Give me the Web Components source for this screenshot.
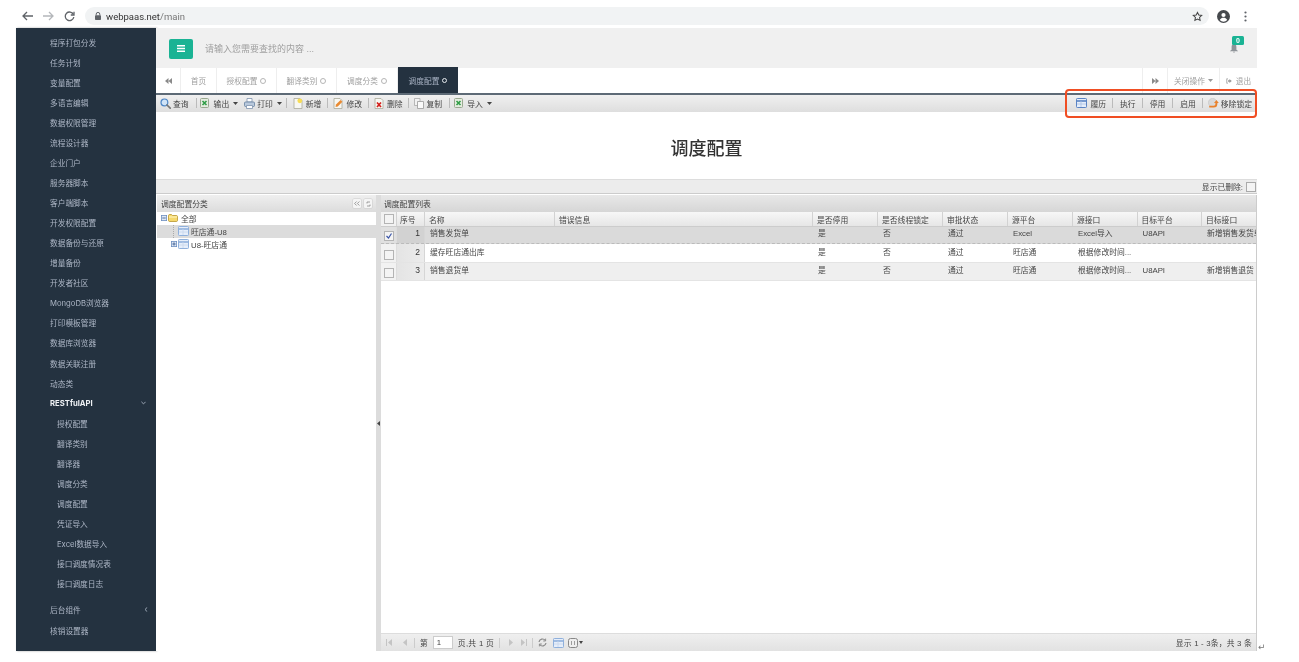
<!DOCTYPE html>
<html lang="zh">
<head>
<meta charset="utf-8">
<title>调度配置</title>
<style>
html, body { margin: 0; height: 662px; overflow: hidden; background: #fff; }
body { font-family: "Liberation Sans", "Noto Sans CJK SC", sans-serif; font-size: 7.8px; color: #444; filter: blur(.35px); }
</style>
</head>
<body>
<app-shell>
  <browser-bar slot="bar"></browser-bar>
  <side-menu slot="side"></side-menu>
  <top-header></top-header>
  <tab-strip></tab-strip>
  <tool-bar></tool-bar>
  <page-title>调度配置</page-title>
  <filter-bar></filter-bar>
  <split-view>
    <tree-panel slot="left"></tree-panel>
    <grid-panel slot="right"></grid-panel>
  </split-view>
</app-shell>

<script>
// shared little pictures for the toolbars and the tree
const doc = (inner) => `<svg width="10" height="11" viewBox="0 0 10 11"><path d="M1 .5h6l2 2v8H1z" fill="#f7f7f2" stroke="#a9a99a" stroke-width=".8"/>${inner}</svg>`;
const grid = (line, soft) => `<svg width="11" height="10" viewBox="0 0 11 10"><rect x=".5" y=".5" width="10" height="9" rx=".8" fill="#e6eefa" stroke="${line}"/><path d="M1 3h9" stroke="${line}" stroke-width="1.6"/><path d="M1 6h9M5 3v6" stroke="${soft}" stroke-width=".8"/></svg>`;
const icons = {
  search: `<svg width="11" height="11" viewBox="0 0 11 11"><circle cx="4.4" cy="4.4" r="3.4" fill="#cfe3f7" stroke="#4d86c6" stroke-width="1.2"/><path d="M7 7l3.2 3.2" stroke="#777" stroke-width="1.7" stroke-linecap="round"/></svg>`,
  excel: `<svg width="9" height="10" viewBox="0 0 9 10"><rect x=".5" y=".5" width="8" height="9" rx="1" fill="#e4ecdf" stroke="#9aa890"/><path d="M2.5 3l4 4M6.5 3l-4 4" stroke="#2f9d46" stroke-width="1.6"/></svg>`,
  print: `<svg width="11" height="11" viewBox="0 0 11 11"><path d="M3 .5h5v3.5H3z" fill="#fff" stroke="#7f93ad" stroke-width=".8"/><rect x=".5" y="4" width="10" height="4.5" rx="1" fill="#b9c9dc" stroke="#64809f" stroke-width=".8"/><path d="M2.5 7.5h6v3h-6z" fill="#fff" stroke="#7f93ad" stroke-width=".8"/></svg>`,
  add: doc(`<circle cx="6.8" cy="2.8" r="2.4" fill="#f7dc55"/>`),
  edit: doc(`<path d="M2.5 9l.5-2.4L7.6 2l1.8 1.8L4.8 8.4z" fill="#e98a32"/>`),
  del: doc(`<path d="M3 4.5l4 4.5M7 4.5l-4 4.5" stroke="#d3201c" stroke-width="1.7"/>`),
  copy: `<svg width="10" height="11" viewBox="0 0 10 11"><path d="M.5.5h5.5v7H.5z" fill="#f2f2f2" stroke="#aaa" stroke-width=".8"/><path d="M3.5 3.5h6v7h-6z" fill="#fafafa" stroke="#999" stroke-width=".8"/></svg>`,
  unlock: `<svg width="11" height="11" viewBox="0 0 11 11"><circle cx="4.6" cy="4.6" r="4.2" fill="#d9d9d9" stroke="#c2c2c2" stroke-width=".6"/><path d="M1.2 8.6h4.6c1.6 0 2.6-1 2.6-2.6V4.4" fill="none" stroke="#e9822c" stroke-width="1.9"/><path d="M6 5l2.4-3L10.8 5z" fill="#e9822c"/></svg>`,
  table: grid("#5b84c4", "#a9c0e4"),
  paleTable: grid("#8fb0dc", "#c6d6ec"),
  box: (sign) => `<svg width="6" height="6" viewBox="0 0 6 6"><rect x=".4" y=".4" width="5.2" height="5.2" fill="#dfe8f5" stroke="#6d8fc0" stroke-width=".8"/><path d="${sign === '+' ? 'M1.3 3h3.4M3 1.3v3.4' : 'M1.3 3h3.4'}" stroke="#34568c" stroke-width=".8"/></svg>`,
  folder: `<svg width="10" height="8" viewBox="0 0 10 8"><path d="M.5 1.5C.5 1 1 .5 1.5.5h2l1 1h4c.5 0 1 .5 1 1v4c0 .5-.5 1-1 1h-7c-.5 0-1-.5-1-1z" fill="#f6d86b" stroke="#b8962e" stroke-width=".8"/><path d="M1 3h8" stroke="#fff6c4"/></svg>`
};

class AppShell extends HTMLElement {
  constructor() {
    super();
    this.attachShadow({ mode: "open" }).innerHTML = `
    <style>
      :host { display: block; width: 1299px; }
      .work { display: flex; height: 623px; margin-left: 16px; }
      main { width: 1101px; display: flex; flex-direction: column; min-width: 0; }
      .mark { align-self: flex-end; margin: 0 0 -1px 1px; font: 9px "DejaVu Sans", sans-serif; color: #777; }
    </style>
    <slot name="bar"></slot>
    <div class="work">
      <slot name="side"></slot>
      <main><slot></slot></main>
      <span class="mark">↵</span>
    </div>`;
  }
}

class BrowserBar extends HTMLElement {
  constructor() {
    super();
    this.attachShadow({ mode: "open" }).innerHTML = `
    <style>
      :host { display: flex; align-items: center; box-sizing: border-box; width: 1257px; height: 28px; padding: 4px 9px 0 22px; background: #fff; }
      svg { display: block; flex: none; }
      .pill { flex: none; width: 1124px; height: 18px; margin-left: 10px; border-radius: 9px; background: #f1f3f4; display: flex; align-items: center; padding: 0 6px 0 10px; box-sizing: border-box; }
      .url { margin-left: 5px; font: 9.5px Roboto, sans-serif; color: #333; }
      .url span { color: #777; }
      .star { margin-left: auto; }
    </style>
    <svg width="11" height="10" viewBox="0 0 11 10" fill="none" stroke="#5f6368" stroke-width="1.3"><path d="M11 5H1.2M5 1L1 5l4 4"/></svg>
    <svg style="margin-left:10px" width="11" height="10" viewBox="0 0 11 10" fill="none" stroke="#b4b7ba" stroke-width="1.3"><path d="M0 5h9.8M6 1l4 4-4 4"/></svg>
    <svg style="margin-left:10px" width="11" height="11" viewBox="0 0 11 11" fill="none" stroke="#5f6368" stroke-width="1.3"><path d="M9.4 3.4A4.3 4.3 0 1 0 9.8 6"/><path d="M10 .8v3.2H6.8" /></svg>
    <div class="pill">
      <svg width="6" height="8" viewBox="0 0 6 8"><path d="M1.2 3.4V2.2a1.8 1.8 0 0 1 3.6 0v1.2" fill="none" stroke="#5f6368"/><rect y="3.2" width="6" height="4.8" rx=".8" fill="#5f6368"/></svg>
      <div class="url">webpaas.net<span>/main</span></div>
      <svg class="star" width="11" height="11" viewBox="0 0 24 24" fill="none" stroke="#444" stroke-width="2.2"><path d="M12 3l2.8 5.9 6.4.8-4.7 4.4 1.2 6.4L12 17.4l-5.7 3.1 1.2-6.4-4.7-4.4 6.4-.8z"/></svg>
    </div>
    <svg style="margin-left:8px" width="13" height="13" viewBox="0 0 13 13"><circle cx="6.5" cy="6.5" r="6.5" fill="#46494d"/><circle cx="6.5" cy="5" r="2.1" fill="#fff"/><path d="M2.8 10c.8-1.6 2.2-2.2 3.7-2.2s2.9.6 3.7 2.2a5 5 0 0 1-7.4 0z" fill="#fff"/></svg>
    <svg style="margin-left:14px" width="3" height="11" viewBox="0 0 3 11" fill="#5f6368"><circle cx="1.5" cy="1.5" r="1.1"/><circle cx="1.5" cy="5.5" r="1.1"/><circle cx="1.5" cy="9.5" r="1.1"/></svg>`;
  }
}

class SideMenu extends HTMLElement {
  constructor() {
    super();
    const top = ["程序打包分发", "任务计划", "变量配置", "多语言编辑", "数据权限管理", "流程设计器", "企业门户", "服务器脚本", "客户端脚本", "开发权限配置", "数据备份与还原", "增量备份", "开发者社区", "MongoDB浏览器", "打印模板管理", "数据库浏览器", "数据关联注册", "动态类"];
    const sub = ["授权配置", "翻译类别", "翻译器", "调度分类", "调度配置", "凭证导入", "Excel数据导入", "接口调度情况表", "接口调度日志"];
    const rows = top.map(t => `<li>${t}</li>`).join("")
      + `<li class="open">RESTfulAPI<svg width="5" height="4" viewBox="0 0 5 4" fill="none" stroke="#9aa5b3"><path d="M.4.8l2.1 2.1L4.6.8"/></svg></li>`
      + sub.map(t => `<li class="sub">${t}</li>`).join("")
      + `<li class="gap">后台组件<svg style="margin-right:-2px" width="4" height="5" viewBox="0 0 4 5" fill="none" stroke="#9aa5b3"><path d="M3.2.4L1 2.5l2.2 2.1"/></svg></li><li>核销设置器</li>`;
    this.attachShadow({ mode: "open" }).innerHTML = `
    <style>
      :host { display: block; flex: none; width: 140px; height: 100%; background: #243240; box-shadow: 1px 0 2px rgba(0,0,0,.35); overflow: hidden; }
      ul { list-style: none; margin: 0; padding: 4px 10px 0 34px; }
      li { height: 20.07px; display: flex; align-items: center; justify-content: space-between; font: 7.7px Inter, "Noto Sans CJK SC", sans-serif; color: #adb6c5; white-space: nowrap; }
      .open { font-weight: 700; color: #eef1f4; }
      .sub { padding-left: 7px; }
      .gap { margin-top: 6.2px; }
    </style>
    <ul>${rows}</ul>`;
  }
}

class TopHeader extends HTMLElement {
  constructor() {
    super();
    this.attachShadow({ mode: "open" }).innerHTML = `
    <style>
      :host { display: flex; align-items: center; flex: none; height: 40px; padding: 0 13px; background: #f0f0f0; font: 9px "Liberation Sans", "Noto Sans CJK SC", sans-serif; color: #a0a0a0; }
      .menu { width: 24px; height: 20px; margin-top: 1px; border-radius: 2px; background: #1ab394; display: flex; align-items: center; justify-content: center; }
      .menu svg { display: block; }
      .find { margin-left: 12px; }
      .bell { position: relative; margin-left: auto; margin-right: 6px; width: 8px; height: 9px; }
      .bell svg { display: block; }
      .bell b { position: absolute; left: 2px; top: -7.5px; width: 12px; height: 9px; border-radius: 1.5px; background: #1ab394; color: #fff; font: 700 7px/9px "Liberation Sans", sans-serif; text-align: center; }
    </style>
    <div class="menu"><svg width="8" height="7" viewBox="0 0 8 7" fill="#fff"><path d="M0 0h8v1.4H0zM0 2.8h8v1.4H0zM0 5.6h8V7H0z"/></svg></div>
    <span class="find">请输入您需要查找的内容 ...</span>
    <div class="bell">
      <svg width="8" height="9" viewBox="0 0 10 11" fill="#8f9499"><path d="M5 0c2 0 3 1.5 3 3.5V7l2 1.6V9H0v-.4L2 7V3.5C2 1.5 3 0 5 0zM3.8 9.6h2.4L5 11z"/></svg>
      <b>0</b>
    </div>`;
  }
}

class TabStrip extends HTMLElement {
  constructor() {
    super();
    const ring = `<i></i>`;
    this.attachShadow({ mode: "open" }).innerHTML = `
    <style>
      :host { display: flex; flex: none; height: 25px; border-bottom: 2px solid #5d6a76; background: #fff; font: 7.7px "Liberation Sans", "Noto Sans CJK SC", sans-serif; color: #a0a0a0; }
      div { box-sizing: border-box; display: flex; align-items: center; justify-content: center; gap: 3px; border-right: 1px solid #eee; white-space: nowrap; }
      i { width: 4px; height: 4px; border: 1px solid #b5b5b5; border-radius: 50%; }
      .on { background: #243240; color: #a7b1c2; margin-top: -1px; border: 0; }
      .on i { border-color: #e4e8ec; border-width: 1.5px; width: 3px; height: 3px; }
      .fill { flex: 1; border: 0; }
      .edge { border-left: 1px solid #eee; border-right: 0; }
    </style>
    <div style="width:25px"><svg width="7" height="6" viewBox="0 0 7 6" fill="#8a8a8a"><path d="M3.5 0v6L0 3zM7 0v6L3.5 3z"/></svg></div>
    <div style="width:36px">首页</div>
    <div style="width:60px">授权配置${ring}</div>
    <div style="width:60px">翻译类别${ring}</div>
    <div style="width:61px">调度分类${ring}</div>
    <div class="on" style="width:60px">调度配置${ring}</div>
    <div class="fill"></div>
    <div class="edge" style="width:25px"><svg width="7" height="6" viewBox="0 0 7 6" fill="#8a8a8a"><path d="M0 0v6l3.5-3zM3.5 0v6L7 3z"/></svg></div>
    <div class="edge" style="width:52px">关闭操作<svg width="5" height="3" viewBox="0 0 5 3" fill="#999"><path d="M0 0h5L2.5 3z"/></svg></div>
    <div class="edge" style="width:38px;gap:4px"><svg width="6" height="6" viewBox="0 0 6 6" fill="#999"><path d="M2 .4H.4v5.2H2v-.8H1.2V1.2H2zM3.4 1l2.4 2-2.4 2V3.8H2V2.2h1.4z"/></svg>退出</div>`;
  }
}

class ToolBar extends HTMLElement {
  constructor() {
    super();
    // [kind, margin-left, extra]
    const left = [["i",4,"search"],["t",2,"查询"],["s",7],["i",3,"excel"],["t",5,"输出"],["c",4],["i",6,"print"],["t",2,"打印"],["c",4],["s",4],["i",6,"add"],["t",3,"新增"],["s",6],["i",5,"edit"],["t",3,"修改"],["s",6],["i",5,"del"],["t",3,"删除"],["s",5],["i",5,"copy"],["t",3,"复制"],["s",7],["i",4,"excel"],["t",4,"导入"],["c",4]];
    const right = [["i",0,"table"],["t",3,"履历"],["s",6],["t",7,"执行"],["s",6],["t",7,"停用"],["s",7],["t",7,"启用"],["s",6],["i",5,"unlock"],["t",2,"移除锁定"]];
    const draw = (list) => list.map(([kind, ml, extra]) => {
      if (kind === "i") return `<span class="i" style="margin-left:${ml}px">${icons[extra]}</span>`;
      if (kind === "t") return `<span class="t" style="margin-left:${ml}px">${extra}</span>`;
      if (kind === "s") return `<span class="s" style="margin-left:${ml}px"></span>`;
      return `<svg class="c" style="margin-left:${ml}px" width="5" height="3" viewBox="0 0 5 3" fill="#444"><path d="M0 0h5L2.5 3z"/></svg>`;
    }).join("");
    this.attachShadow({ mode: "open" }).innerHTML = `
    <style>
      :host { position: relative; display: flex; align-items: center; flex: none; box-sizing: border-box; height: 17px; padding: 0 5px 1px 0; background: linear-gradient(#f0f0f0, #dedede); font: 7.8px "Liberation Sans", "Noto Sans CJK SC", sans-serif; color: #444; }
      .i { display: flex; flex: none; }
      .t { white-space: nowrap; }
      .s { width: 1px; height: 10px; background: #bbb; }
      .end { margin-left: auto; display: flex; align-items: center; }
      .mark { position: absolute; right: 0; top: -6px; box-sizing: border-box; width: 192px; height: 29px; border: 2px solid #f04e23; border-radius: 4px; }
    </style>
    ${draw(left)}
    <div class="end">${draw(right)}</div>
    <div class="mark"></div>`;
  }
}

class PageTitle extends HTMLElement {
  constructor() {
    super();
    this.attachShadow({ mode: "open" }).innerHTML = `
    <style>
      :host { display: flex; align-items: center; justify-content: center; flex: none; height: 67px; padding-top: 3px; box-sizing: border-box; background: #fff; font: 500 18px "Noto Sans CJK SC", sans-serif; color: #333; }
    </style>
    <slot></slot>`;
  }
}

class FilterBar extends HTMLElement {
  constructor() {
    super();
    this.attachShadow({ mode: "open" }).innerHTML = `
    <style>
      :host { display: flex; align-items: center; justify-content: flex-end; gap: 3px; flex: none; height: 15px; box-sizing: border-box; padding-right: 1px; border-top: 1px solid #ddd; border-bottom: 1px solid #ccc; background: #ececec; font: 7.8px "Liberation Sans", "Noto Sans CJK SC", sans-serif; color: #444; }
      i { width: 8px; height: 8px; border: 1px solid #aaa; background: #f4f4f4; }
    </style>
    显示已删除:<i></i>`;
  }
}

class SplitView extends HTMLElement {
  constructor() {
    super();
    this.attachShadow({ mode: "open" }).innerHTML = `
    <style>
      :host { display: flex; flex: 1; min-height: 0; padding: 1px 0 0 1px; background: #fff; }
      .bar { flex: none; width: 5px; background: #dcdcdc; display: flex; align-items: center; justify-content: center; }
      ::slotted([slot=left]) { width: 219px; flex: none; }
      ::slotted([slot=right]) { flex: 1; min-width: 0; }
    </style>
    <slot name="left"></slot>
    <div class="bar"><svg width="3" height="5" viewBox="0 0 3 5" fill="#444"><path d="M3 0v5L0 2.5z"/></svg></div>
    <slot name="right"></slot>`;
  }
}

class TreePanel extends HTMLElement {
  constructor() {
    super();
    this.attachShadow({ mode: "open" }).innerHTML = `
    <style>
      :host { display: block; background: #fff; font: 7.8px "Liberation Sans", "Noto Sans CJK SC", sans-serif; color: #444; }
      header { display: flex; align-items: center; height: 17px; padding: 0 4px; background: linear-gradient(#efefef, #dcdcdc); gap: 3px; }
      header span { margin-right: auto; }
      header i { display: flex; align-items: center; justify-content: center; width: 8px; height: 9px; border-radius: 1px; background: #f5f5f5; box-shadow: 0 0 0 .5px #ccc; }
      .row { display: flex; align-items: center; box-sizing: border-box; height: 13px; padding-bottom: 1px; white-space: nowrap; }
      .row svg { display: block; flex: none; }
      .pick { background: #dcdcdc; }
      .line { width: 0; height: 13px; border-left: 1px dotted #aaa; margin: 0 4px 0 16px; }
    </style>
    <header><span>调度配置分类</span>
      <i><svg width="6" height="5" viewBox="0 0 6 5" fill="none" stroke="#888" stroke-width=".8"><path d="M2.6.5L.6 2.5l2 2M5.4.5l-2 2 2 2"/></svg></i>
      <i><svg width="5" height="6" viewBox="0 0 5 6" fill="none" stroke="#888" stroke-width=".8"><path d="M1 2.5V1h3M4 3.5V5H1"/></svg></i>
    </header>
    <div class="row" style="padding-left:4px">${icons.box("-")}<span style="margin-left:1px;display:flex">${icons.folder}</span><span style="margin-left:3px">全部</span></div>
    <div class="row pick"><span class="line"></span>${icons.paleTable}<span style="margin-left:2px">旺店通-U8</span></div>
    <div class="row" style="padding-left:14px">${icons.box("+")}<span style="margin-left:1px;display:flex">${icons.paleTable}</span><span style="margin-left:2px">U8-旺店通</span></div>`;
  }
}

class GridPanel extends HTMLElement {
  constructor() {
    super();
    const heads = ["序号", "名称", "错误信息", "是否停用", "是否线程锁定", "审批状态", "源平台", "源接口", "目标平台", "目标接口"];
    const rows = [
      { h: 17, pad: 1, cls: "pick", tick: true, cells: ["1", "销售发货单", "", "是", "否", "通过", "Excel", "Excel导入", "U8API", "新增销售发货单"] },
      { h: 19, pad: 3, cls: "", cells: ["2", "缓存旺店通出库", "", "是", "否", "通过", "旺店通", "根据修改时间...", "", ""] },
      { h: 18, pad: 2, cls: "alt", cells: ["3", "销售退货单", "", "是", "否", "通过", "旺店通", "根据修改时间...", "U8API", "新增销售退货"] }
    ];
    const check = (on) => `<span class="box">${on ? `<svg width="8" height="8" viewBox="0 0 8 8" fill="none" stroke="#3a55a8" stroke-width="1.2"><path d="M1.5 4l2 2 3-4.5"/></svg>` : ""}</span>`;
    const body = rows.map(r => `<div class="row ${r.cls}" style="height:${r.h}px;--pad:${r.pad}px"><div class="c0">${check(r.tick)}</div>${r.cells.map((c, i) => `<div class="${i === 0 ? "num" : "cell"}">${c}</div>`).join("")}</div>`).join("");
    this.attachShadow({ mode: "open" }).innerHTML = `
    <style>
      :host { display: flex; flex-direction: column; background: #fff; border-right: 1px solid #ccc; font: 7.8px "Liberation Sans", "Noto Sans CJK SC", sans-serif; color: #444; overflow: hidden; }
      header { flex: none; height: 17px; padding-left: 3px; display: flex; align-items: center; background: linear-gradient(#e8e8e8, #d6d6d6); }
      .row, .head { display: grid; grid-template-columns: 16px 28px 130px 258px 65px 65px 65px 65px 64.5px 64.5px 1fr; }
      .head { flex: none; height: 15px; align-items: stretch; background: linear-gradient(#f7f7f7, #e6e6e6); border-bottom: 1px solid #ccc; box-sizing: border-box; }
      .head div { display: flex; align-items: center; padding-left: 4px; border-right: 1px solid #d2d2d2; white-space: nowrap; overflow: hidden; }
      .head div:nth-child(2) { padding-left: 3px; }
      .head div:last-child { border: 0; }
      .head .c0 { padding: 0; justify-content: center; }
      .row { box-sizing: border-box; border-bottom: 1px solid #e4e4e4; }
      .row div { white-space: nowrap; overflow: hidden; }
      .cell { padding: var(--pad) 0 0 5px; line-height: 11px; }
      .num { padding: var(--pad) 4px 0 0; line-height: 11px; font-size: 8.5px; color: #333; text-align: right; background: linear-gradient(90deg, #e4e4e4, #ececec); border-right: 1px solid #d6d6d6; }
      .c0 { display: flex; justify-content: center; align-items: flex-end; padding-bottom: 2px; background: #f2f2f2; border-right: 1px solid #ddd; }
      .pick { background: #dadada; border-bottom: 1px dashed #bbb; }
      .pick .num { background: #d2d2d2; }
      .pick .c0 { background: #e0e0e0; }
      .alt { background: #efefef; }
      .box { display: block; width: 8px; height: 8px; border: 1px solid #b4b4b4; background: #f4f4f4; }
      .box svg { display: block; }
      .room { flex: 1; }
      footer { flex: none; height: 18px; display: flex; align-items: center; background: linear-gradient(#efefef, #e2e2e2); border-top: 1px solid #ddd; box-sizing: border-box; }
      footer svg { display: block; flex: none; }
      footer input { box-sizing: border-box; width: 20px; height: 13px; margin: 0 0 0 5px; padding: 0 0 0 3px; border: 1px solid #ccc; background: #fff; font: 7.8px "Liberation Sans", sans-serif; color: #444; outline: 0; }
      .s { width: 1px; height: 10px; background: #ccc; flex: none; }
      .count { margin-left: auto; padding-right: 4px; letter-spacing: .2px; }
    </style>
    <header>调度配置列表</header>
    <div class="head"><div class="c0"><span class="box"></span></div>${heads.map(h => `<div>${h}</div>`).join("")}</div>
    ${body}
    <div class="room"></div>
    <footer>
      <svg style="margin-left:5px" width="6" height="7" viewBox="0 0 6 7" fill="#c4c4c4"><path d="M0 0h1v7H0zM6 0v7L2 3.5z"/></svg>
      <svg style="margin-left:11px" width="4" height="7" viewBox="0 0 4 7" fill="#c4c4c4"><path d="M4 0v7L0 3.5z"/></svg>
      <span class="s" style="margin-left:7px"></span>
      <span style="margin-left:5px">第</span>
      <input value="1" readonly>
      <span style="margin-left:5px;letter-spacing:.3px">页,共 1 页</span>
      <span class="s" style="margin-left:5px"></span>
      <svg style="margin-left:9px" width="4" height="7" viewBox="0 0 4 7" fill="#c4c4c4"><path d="M0 0v7l4-3.5z"/></svg>
      <svg style="margin-left:8px" width="6" height="7" viewBox="0 0 6 7" fill="#c4c4c4"><path d="M0 0v7l4-3.5zM5 0h1v7H5z"/></svg>
      <span class="s" style="margin-left:5px"></span>
      <svg style="margin-left:5px" width="9" height="9" viewBox="0 0 9 9" fill="none" stroke="#888" stroke-width="1.2"><path d="M1 4a3.5 3.5 0 0 1 6.3-1.5M8 5a3.5 3.5 0 0 1-6.3 1.5"/><path d="M7.6.6v2.4H5.2M1.4 8.4V6h2.4" stroke-width=".9"/></svg>
      <span style="margin-left:6px;display:flex">${icons.paleTable}</span>
      <svg style="margin-left:4px" width="10" height="10" viewBox="0 0 10 10" fill="#eee" stroke="#888"><rect x=".5" y=".5" width="9" height="9" rx="2"/><path d="M3.5 3v4M6.5 3v4" stroke-width=".8"/></svg>
      <svg style="margin-left:1px" width="4" height="3" viewBox="0 0 4 3" fill="#444"><path d="M0 0h4L2 3z"/></svg>
      <span class="count">显示 1 - 3条，共 3 条</span>
    </footer>`;
  }
}

customElements.define("app-shell", AppShell);
customElements.define("browser-bar", BrowserBar);
customElements.define("side-menu", SideMenu);
customElements.define("top-header", TopHeader);
customElements.define("tab-strip", TabStrip);
customElements.define("tool-bar", ToolBar);
customElements.define("page-title", PageTitle);
customElements.define("filter-bar", FilterBar);
customElements.define("split-view", SplitView);
customElements.define("tree-panel", TreePanel);
customElements.define("grid-panel", GridPanel);
</script>
</body>
</html>
